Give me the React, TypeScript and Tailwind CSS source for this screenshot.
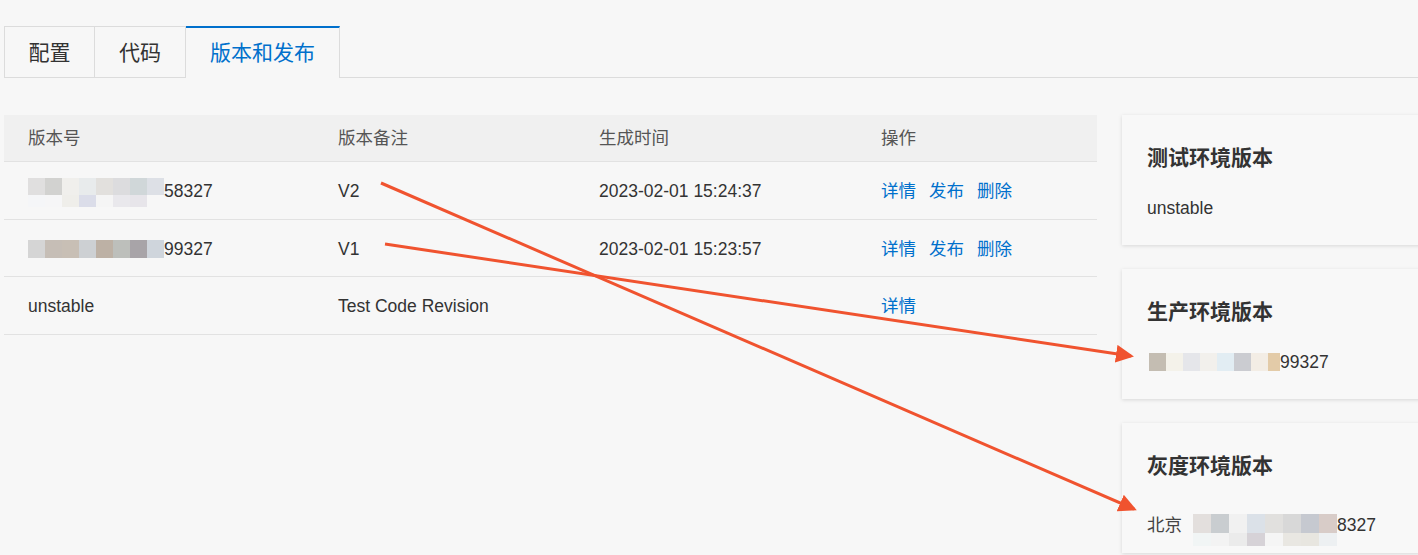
import React from "react";

const FONT = '"Liberation Sans", "Noto Sans CJK SC", sans-serif';

// mosaic masks over hidden version ids
const mask1Top = ["#e0dfdf", "#d2d2d0", "#f0efec", "#e8ebec", "#e2e0dd", "#dcdcde", "#d0d7d9", "#dde0e6"];
const mask1Bottom = ["#f5f6f8", "#f6f6f7", "#efeeea", "#dbdde9", "#f5f5f5", "#e9e8ec", "#e7e5ea", "transparent"];
const mask2 = ["#d5d5d5", "#c6beb6", "#c8bfb5", "#cdd0d3", "#bdb1a5", "#bdbfbb", "#a8a4a8", "#cfd5dc"];
const maskProd = ["#c4bdb2", "#f4f2ea", "#e5e6ea", "#f2f0ec", "#e2edf3", "#cbccd1", "#f3ede5"];
const maskGrayTop = ["#e3dfdd", "#c9cdd0", "#f1f1f1", "#dbe1e8", "#e1e0de", "#d8d8d8", "#c6c9d0", "#d8ccc8"];
const maskGrayBottom = ["#f1f5f5", "#f3f3f3", "#ebebeb", "#d6d2d7", "#f5f5f5", "#e9e7e2", "#e8e6e0", "#edf0f2"];

const Mosaic = ({ rows, cell, heights }: { rows: string[][]; cell: number; heights: number[] }) => (
    <span className="inline-flex flex-col align-middle">
        {rows.map((row, i) => (
            <span key={i} className="flex">
                {row.map((c, j) => (
                    <span key={j} style={{ width: cell, height: heights[i], background: c }} />
                ))}
            </span>
        ))}
    </span>
);

const rows = [
    {
        id: (
            <span className="flex items-center">
                <span className="mt-[2px]">
                    <Mosaic rows={[mask1Top, mask1Bottom]} cell={17} heights={[17, 12]} />
                </span>
                <span>58327</span>
            </span>
        ),
        note: "V2",
        time: "2023-02-01 15:24:37",
        actions: ["详情", "发布", "删除"],
    },
    {
        id: (
            <span className="flex items-center">
                <Mosaic rows={[mask2]} cell={17} heights={[18]} />
                <span>99327</span>
            </span>
        ),
        note: "V1",
        time: "2023-02-01 15:23:57",
        actions: ["详情", "发布", "删除"],
    },
    { id: <span>unstable</span>, note: "Test Code Revision", time: "", actions: ["详情"] },
];

const Card = ({ title, children }: { title: string; children: React.ReactNode }) => (
    <div className="w-[330px] h-[130px] bg-[#f8f8f8] shadow-[0_1px_4px_rgba(0,0,0,0.13)] pl-[25px] pt-[29px]">
        <div className="text-[21px] leading-[28px] font-bold text-[#333]">{title}</div>
        <div className="mt-[24px] text-[17.5px] leading-[24px] text-[#333]">{children}</div>
    </div>
);

const App = () => {
    return (
        <div className="relative w-full h-[555px] overflow-hidden bg-[#f7f7f7]" style={{ fontFamily: FONT }}>
            {/* tabs */}
            <div className="flex pt-[26px] pl-[4px]">
                <div className="w-[91px] h-[52px] pt-[2px] flex items-center justify-center border border-[#dcdcdc] text-[21px] text-[#333]">
                    配置
                </div>
                <div className="w-[91px] h-[52px] pt-[2px] flex items-center justify-center border border-l-0 border-[#dcdcdc] text-[21px] text-[#333]">
                    代码
                </div>
                <div className="w-[154px] h-[52px] flex items-center justify-center border-t-2 border-t-[#0070cc] border-r border-r-[#dcdcdc] text-[21px] text-[#0070cc]">
                    版本和发布
                </div>
                <div className="flex-1 border-b border-[#dcdcdc]" />
            </div>

            <div className="flex mt-[37px] pl-[4px] gap-[25px]">
                {/* versions table */}
                <div className="w-[1093px] shrink-0 text-[17.5px]">
                    <div className="flex h-[47px] items-center bg-[#f0f0f0] border-b border-[#e2e2e2] text-[#555]">
                        <div className="w-[310px] pl-[24px]">版本号</div>
                        <div className="w-[261px] pl-[24px]">版本备注</div>
                        <div className="w-[282px] pl-[24px]">生成时间</div>
                        <div className="flex-1 pl-[24px]">操作</div>
                    </div>
                    {rows.map((r, i) => (
                        <div key={i} className="flex h-[57.5px] pt-[2px] items-center border-b border-[#e2e2e2] text-[#333]">
                            <div className="w-[310px] pl-[24px]">{r.id}</div>
                            <div className="w-[261px] pl-[24px]">{r.note}</div>
                            <div className="w-[282px] pl-[24px]">{r.time}</div>
                            <div className="flex-1 pl-[24px] flex gap-[13px] text-[#0070cc]">
                                {r.actions.map((a) => (
                                    <span key={a}>{a}</span>
                                ))}
                            </div>
                        </div>
                    ))}
                </div>

                {/* environment cards */}
                <div className="flex flex-col gap-[24px] shrink-0">
                    <Card title="测试环境版本">unstable</Card>
                    <Card title="生产环境版本">
                        <span className="flex items-center">
                            <span className="ml-[2px] flex">
                                <Mosaic rows={[maskProd]} cell={17} heights={[18]} />
                                <span style={{ width: 12, height: 18, background: "#e3cba8" }} />
                            </span>
                            <span>99327</span>
                        </span>
                    </Card>
                    <Card title="灰度环境版本">
                        <span className="flex items-center">
                            <span className="text-[#444]">北京</span>
                            <span className="ml-[11px] mt-[10px]">
                                <Mosaic rows={[maskGrayTop, maskGrayBottom]} cell={18} heights={[19, 13]} />
                            </span>
                            <span>8327</span>
                        </span>
                    </Card>
                </div>
            </div>

            {/* annotation arrows */}
            <svg className="absolute inset-0 pointer-events-none" width="1418" height="555">
                <defs>
                    <marker id="head" markerWidth="6" markerHeight="6" refX="5" refY="3" orient="auto" markerUnits="strokeWidth">
                        <path d="M0,0 L6,3 L0,6 Z" fill="#f0532f" />
                    </marker>
                </defs>
                <line x1="381" y1="183" x2="1134" y2="509" stroke="#f0532f" strokeWidth="3" markerEnd="url(#head)" />
                <line x1="385" y1="244" x2="1131" y2="356" stroke="#f0532f" strokeWidth="3" markerEnd="url(#head)" />
            </svg>
        </div>
    );
};

export default App;
